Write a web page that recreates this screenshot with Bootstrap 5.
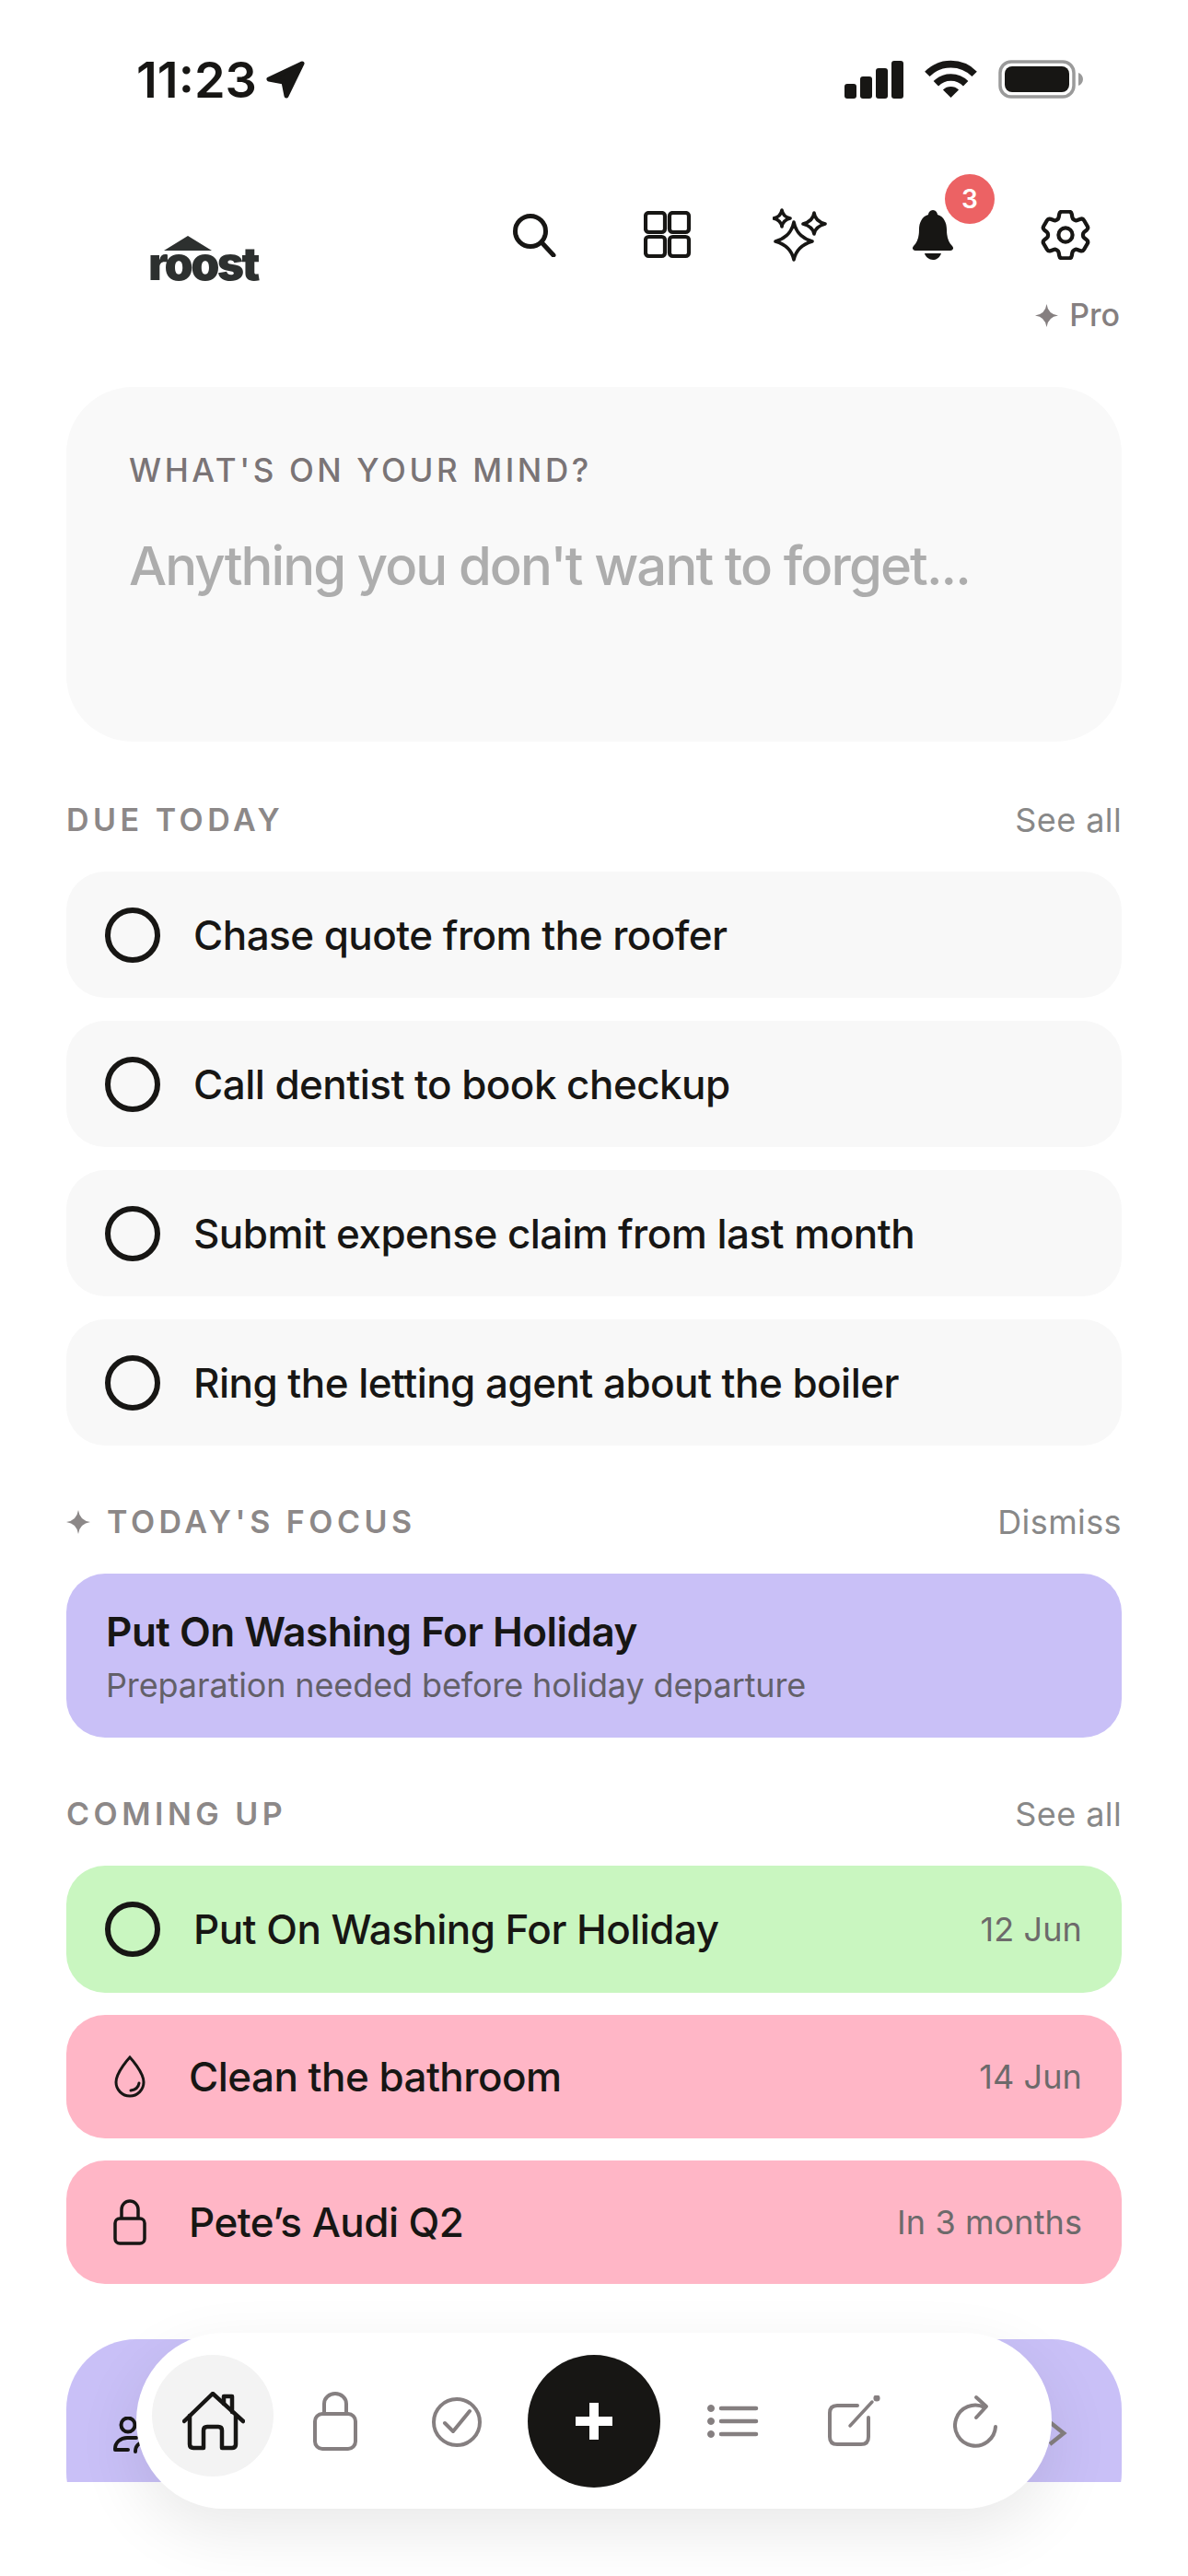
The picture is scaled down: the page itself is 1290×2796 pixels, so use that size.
<!DOCTYPE html>
<html lang="en">
<head>
  <meta charset="UTF-8">
  <meta name="viewport" content="width=device-width, initial-scale=1.0">
  <title>Roost - Home</title>
  <link href="https://cdn.jsdelivr.net/npm/bootstrap@5.3.2/dist/css/bootstrap.min.css" rel="stylesheet">
  <script src="https://cdn.jsdelivr.net/npm/bootstrap@5.3.2/dist/js/bootstrap.bundle.min.js" defer></script>
  <style>
    body { background: #fff; color: #171614; font-family: Inter, "Liberation Sans", sans-serif; }
    svg { display: block; flex: none; }

    .app-screen { width: 1290px; height: 2796px; overflow: hidden; }
    .scroll-pane { height: 2694px; overflow: hidden; }

    /* status bar */
    .status-bar { padding: 65px 113px 0 148px; height: 109px; }
    .status-time { font-size: 54px; font-weight: 600; line-height: 44px; }
    .status-icons { gap: 23px; }
    .signal-bars { gap: 4px; height: 41px; }
    .signal-bars i { display: block; width: 13px; border-radius: 3px; background: #171614; }

    /* header */
    .top-header { margin-top: 117px; padding: 0 72px 0 161px; }
    .logo-mark { margin-top: 30px; width: 122px; }
    .logo-word { font-family: Inter, sans-serif; font-weight: 900; font-size: 50px; line-height: 40px; letter-spacing: -2.6px; color: #2d302f; margin-top: -7px; }
    .tool-icons { margin-right: -11px; }
    .tool-slot { width: 144px; height: 57px; }
    .notif-count { top: -37px; left: 85px; width: 54px; height: 54px; background: #ec6264; color: #fff; font-size: 28px; font-weight: 600; }
    .pro-tag { gap: 12px; margin-top: 44px; margin-right: 2px; color: #857f80; font-size: 34px; font-weight: 500; line-height: 30px; }

    /* content */
    .main-pane { padding: 0 72px; }
    .capture-box { height: 385px; margin-top: 63px; margin-bottom: 65px; padding: 70px 68px 0; background: #f9f9f9; border-radius: 72px; }
    .capture-label { font-size: 35px; font-weight: 500; letter-spacing: 3.6px; line-height: 40px; color: #7a7476; }
    .capture-hint { margin-top: 49px; font-size: 58px; font-weight: 500; line-height: 70px; letter-spacing: -1.9px; color: #adadad; }

    .section-head { height: 40px; margin-bottom: 36px; margin-top: 63px; }
    .section-title { gap: 18px; font-size: 34px; font-weight: 600; letter-spacing: 4.5px; color: #8c8888; line-height: 40px; }
    .section-link { font-size: 36px; letter-spacing: .4px; color: #888; line-height: 40px; }

    .task-stack { gap: 25px; }
    .task-stack.tight { gap: 24px; }
    .task-item { height: 137px; padding: 0 43px 0 42px; border-radius: 42px; background: #f8f8f8; font-size: 44px; font-weight: 500; letter-spacing: -.55px; }
    .task-item.short { height: 134px; padding-left: 51px; }
    .task-tick { width: 60px; height: 60px; margin-right: 36px; border: 6px solid #171614; border-radius: 50%; flex: none; }
    .task-icon { margin-right: 46px; }
    .task-date { margin-left: auto; font-size: 36px; font-weight: 400; letter-spacing: .1px; color: #6d6a6b; }
    .tone-green { background: #c9f6c0; height: 138px; }
    .tone-pink { background: #ffb6c6; }

    .focus-box { height: 178px; padding: 0 43px; background: #c9c0f7; border-radius: 42px; }
    .focus-title { font-size: 44px; font-weight: 600; line-height: 56px; letter-spacing: -.5px; }
    .focus-sub { font-size: 36px; line-height: 44px; margin-top: 8px; letter-spacing: -.12px; color: #636068; }

    .next-box { height: 220px; margin-top: 60px; padding: 84px 59px 0 51px; background: #c9c0f7; border-radius: 76px; }

    /* floating tab bar */
    .tab-dock { left: 148px; top: 2532px; width: 994px; height: 191px; border-radius: 96px; background: #fff; box-shadow: 0 24px 70px rgba(0, 0, 0, .09); }
    .tab-home { left: 17px; top: 24px; width: 132px; height: 132px; background: #f3f3f3; }
    .tab-glyph { position: absolute; }
    .tab-add { left: 425px; top: 24px; width: 144px; height: 144px; background: #171614; }
  </style>
</head>
<body>
  <div class="app-screen position-relative">
    <div class="scroll-pane">

      <!-- status bar -->
      <div class="status-bar d-flex justify-content-between align-items-start">
        <div class="d-flex align-items-center gap-2">
          <span class="status-time">11:23</span>
          <svg width="46" height="44" viewBox="0 0 46 44"><polygon points="41,4 5,21 21,24 24,39" fill="#171614" stroke="#171614" stroke-width="5" stroke-linejoin="round"/></svg>
        </div>
        <div class="status-icons d-flex align-items-center">
          <div class="signal-bars d-flex align-items-end">
            <i style="height: 16px"></i><i style="height: 24px"></i><i style="height: 33px"></i><i style="height: 41px"></i>
          </div>
          <svg width="57" height="42" viewBox="0 0 60 42" fill="none" stroke="#171614" stroke-width="8">
            <path d="M3 15a38 38 0 0 1 54 0"/>
            <path d="M13 26a24 24 0 0 1 34 0"/>
            <path d="M21 33l9 9 9-9a13 13 0 0 0-18 0z" fill="#171614" stroke="none"/>
          </svg>
          <svg width="93" height="42" viewBox="0 0 93 42">
            <rect x="2" y="2" width="80" height="38" rx="12" fill="none" stroke="#9a9a9a" stroke-width="3.5"/>
            <rect x="7" y="7" width="70" height="28" rx="8" fill="#171614"/>
            <path d="M87 14c3 1 5 4 5 7s-2 6-5 7z" fill="#9a9a9a"/>
          </svg>
        </div>
      </div>

      <!-- header -->
      <header class="top-header d-flex justify-content-between align-items-start">
        <div class="logo-mark d-flex flex-column">
          <svg class="ms-3" width="54" height="17" viewBox="0 0 54 17"><polygon points="27,0 53,16 1,16" fill="#2d302f"/></svg>
          <div class="logo-word">roost</div>
        </div>
        <div class="d-flex flex-column align-items-end">
          <div class="tool-icons d-flex">
            <div class="tool-slot d-flex align-items-center justify-content-center">
              <svg width="48" height="48" viewBox="0 0 48 48" fill="none" stroke="#171614" stroke-width="5" stroke-linecap="round"><circle cx="19" cy="20" r="16.5"/><path d="M31 32l13 14"/></svg>
            </div>
            <div class="tool-slot d-flex align-items-center justify-content-center">
              <svg width="52" height="52" viewBox="0 0 52 52" fill="none" stroke="#171614" stroke-width="4.2"><rect x="2" y="2" width="21" height="21" rx="3.5"/><rect x="28" y="2" width="21" height="21" rx="3.5"/><rect x="2" y="28" width="21" height="21" rx="3.5"/><rect x="28" y="28" width="21" height="21" rx="3.5"/></svg>
            </div>
            <div class="tool-slot d-flex align-items-center justify-content-center">
              <svg width="60" height="58" viewBox="0 0 60 58" fill="none" stroke="#171614" stroke-width="3.6" stroke-linejoin="round">
                <path d="M23 15Q26 31 43 36Q26 41 23 56Q20 41 3 36Q20 31 23 15Z"/>
                <path d="M10 2Q11 9 19 11Q11 13 10 20Q9 13 1 11Q9 9 10 2Z"/>
                <path d="M45 5Q46 14 57 17Q46 20 45 28Q44 20 33 17Q44 14 45 5Z"/>
              </svg>
            </div>
            <div class="tool-slot d-flex align-items-center justify-content-center position-relative">
              <svg width="46" height="54" viewBox="0 0 46 54" fill="#171614"><path d="M23 0c3 0 5 3 5 5 7 2 10 9 10 16 0 9 2 14 6 18 2 2 1 5-2 5H4c-3 0-4-3-2-5 4-4 6-9 6-18 0-7 3-14 10-16 0-2 2-5 5-5z"/><path d="M14 47h18c-1 4-5 7-9 7s-8-3-9-7z"/></svg>
              <span class="notif-count position-absolute rounded-circle d-flex align-items-center justify-content-center">3</span>
            </div>
            <div class="tool-slot d-flex align-items-center justify-content-center">
              <svg width="54" height="54" viewBox="2.4 2.4 19.2 19.2" fill="none" stroke="#171614" stroke-width="1.5" stroke-linejoin="round"><path d="M9.594 3.94c.09-.542.56-.94 1.11-.94h2.593c.55 0 1.02.398 1.11.94l.213 1.281c.063.374.313.686.645.87.074.04.147.083.22.127.325.196.72.257 1.075.124l1.217-.456a1.125 1.125 0 0 1 1.37.49l1.296 2.247a1.125 1.125 0 0 1-.26 1.431l-1.003.827c-.293.241-.438.613-.43.992a7.723 7.723 0 0 1 0 .255c-.008.378.137.75.43.991l1.004.827c.424.35.534.955.26 1.43l-1.298 2.247a1.125 1.125 0 0 1-1.369.491l-1.217-.456c-.355-.133-.75-.072-1.076.124a6.47 6.47 0 0 1-.22.128c-.331.183-.581.495-.644.869l-.213 1.281c-.09.543-.56.94-1.11.94h-2.594c-.55 0-1.019-.398-1.11-.94l-.213-1.281c-.062-.374-.312-.686-.644-.87a6.52 6.52 0 0 1-.22-.127c-.325-.196-.72-.257-1.076-.124l-1.217.456a1.125 1.125 0 0 1-1.369-.49l-1.297-2.247a1.125 1.125 0 0 1 .26-1.431l1.004-.827c.292-.24.437-.613.43-.991a6.932 6.932 0 0 1 0-.255c.007-.38-.138-.751-.43-.992l-1.004-.827a1.125 1.125 0 0 1-.26-1.43l1.297-2.247a1.125 1.125 0 0 1 1.37-.491l1.216.456c.356.133.751.072 1.076-.124.072-.044.146-.086.22-.128.332-.183.582-.495.644-.869l.214-1.28Z"/><circle cx="12" cy="12" r="2.7"/></svg>
            </div>
          </div>
          <div class="pro-tag d-flex align-items-center">
            <svg width="25" height="25" viewBox="0 0 25 25" fill="#857f80"><path d="M12.5 0Q14 11 25 12.5Q14 14 12.5 25Q11 14 0 12.5Q11 11 12.5 0Z"/></svg>
            <span>Pro</span>
          </div>
        </div>
      </header>

      <main class="main-pane">
        <div class="capture-box">
          <div class="capture-label">WHAT'S ON YOUR MIND?</div>
          <div class="capture-hint">Anything you don't want to forget...</div>
        </div>

        <div class="section-head d-flex justify-content-between align-items-center">
          <div class="section-title">DUE TODAY</div>
          <div class="section-link">See all</div>
        </div>
        <div class="task-stack d-flex flex-column" id="due-list"></div>

        <div class="section-head d-flex justify-content-between align-items-center">
          <div class="section-title d-flex align-items-center">
            <svg width="26" height="26" viewBox="0 0 25 25" fill="#8c8888"><path d="M12.5 0Q14 11 25 12.5Q14 14 12.5 25Q11 14 0 12.5Q11 11 12.5 0Z"/></svg>
            <span>TODAY'S FOCUS</span>
          </div>
          <div class="section-link">Dismiss</div>
        </div>
        <div class="focus-box d-flex flex-column justify-content-center">
          <div class="focus-title">Put On Washing For Holiday</div>
          <div class="focus-sub">Preparation needed before holiday departure</div>
        </div>

        <div class="section-head d-flex justify-content-between align-items-center">
          <div class="section-title">COMING UP</div>
          <div class="section-link">See all</div>
        </div>
        <div class="task-stack tight d-flex flex-column">
          <div class="task-item tone-green d-flex align-items-center">
            <span class="task-tick"></span>
            <span>Put On Washing For Holiday</span>
            <span class="task-date">12 Jun</span>
          </div>
          <div class="task-item short tone-pink d-flex align-items-center">
            <svg class="task-icon" width="36" height="46" viewBox="-1 0 36 46" fill="none" stroke="#171614" stroke-width="3"><path d="M17 2C17 2 2 18 2 29a15 15 0 0 0 30 0C32 18 17 2 17 2Z"/><path d="M18 38Q26 37 27 30" stroke-linecap="round"/></svg>
            <span>Clean the bathroom</span>
            <span class="task-date">14 Jun</span>
          </div>
          <div class="task-item short tone-pink d-flex align-items-center">
            <svg class="task-icon" width="36" height="50" viewBox="0 0 36 50" fill="none" stroke="#171614" stroke-width="3.5"><rect x="2" y="21" width="32" height="27" rx="5"/><path d="M9 21V11a9 9 0 0 1 18 0v10"/></svg>
            <span>Pete’s Audi Q2</span>
            <span class="task-date">In 3 months</span>
          </div>
        </div>

        <div class="next-box d-flex justify-content-between align-items-start">
          <svg width="60" height="40" viewBox="0 0 60 40" fill="none" stroke="#171614" stroke-width="4" stroke-linecap="round"><circle cx="16" cy="9" r="7.5"/><path d="M2 35c0-7 6-12 13-12h10M2 36h14"/><path d="M24 38c0-6 4-10 10-10"/></svg>
          <svg class="mt-1" width="22" height="28" viewBox="0 0 22 28" fill="none" stroke="#857f80" stroke-width="4.5"><path d="M3 2l15 12L3 26"/></svg>
        </div>
      </main>
    </div>

    <!-- floating tab bar -->
    <nav class="tab-dock position-absolute">
      <span class="tab-home position-absolute rounded-circle"></span>
      <svg class="tab-glyph" style="left: 50px; top: 64px" width="68" height="65" viewBox="0 0 68 65" fill="none" stroke="#171614" stroke-width="4.5" stroke-linecap="round" stroke-linejoin="round"><path d="M2 32L33 2l33 30"/><path d="M8 26v31q0 4 4 4h11V42q0-4 4-4h12q4 0 4 4v19h11q4 0 4-4V26"/><path d="M45 13V5h9v17"/></svg>
      <svg class="tab-glyph" style="left: 192px; top: 64px" width="48" height="64" viewBox="0 0 48 64" fill="none" stroke="#857f80" stroke-width="4"><rect x="2" y="24" width="44" height="38" rx="8"/><path d="M12 24V13a12 11 0 0 1 24 0v11"/></svg>
      <svg class="tab-glyph" style="left: 321px; top: 70px" width="54" height="54" viewBox="0 0 54 54" fill="none" stroke="#857f80" stroke-width="4" stroke-linecap="round" stroke-linejoin="round"><circle cx="27" cy="27" r="25"/><path d="M14 28l9 9 18-22"/></svg>
      <span class="tab-add tab-glyph rounded-circle d-flex align-items-center justify-content-center">
        <svg width="42" height="42" viewBox="0 0 42 42" fill="#fff"><rect x="16" y="1" width="10" height="40"/><rect x="1" y="16" width="40" height="10"/></svg>
      </span>
      <svg class="tab-glyph" style="left: 620px; top: 78px" width="56" height="38" viewBox="0 0 56 38" fill="#857f80" stroke="#857f80"><circle cx="4" cy="4" r="3.5"/><circle cx="4" cy="18" r="3.5"/><circle cx="4" cy="32" r="3.5"/><g stroke-width="4.5" stroke-linecap="round"><path d="M15 4h38M15 18h38M15 32h38"/></g></svg>
      <svg class="tab-glyph" style="left: 750px; top: 68px" width="58" height="58" viewBox="0 0 58 58" fill="none" stroke="#857f80" stroke-width="4" stroke-linecap="round"><path d="M33 11H11q-8 0-8 8v26q0 8 8 8h26q8 0 8-8V24"/><path d="M25 33L49 7" stroke-width="3.5"/><circle cx="54" cy="3" r="1.6" fill="#857f80"/></svg>
      <svg class="tab-glyph" style="left: 887px; top: 66px" width="50" height="62" viewBox="0 0 50 62" fill="none" stroke="#857f80" stroke-width="4" stroke-linecap="round" stroke-linejoin="round"><path d="M25 4l11 10-11 12"/><path d="M46 36a22 22 0 1 1-12-21"/></svg>
    </nav>
  </div>

  <script>
    const dueTasks = [
      'Chase quote from the roofer',
      'Call dentist to book checkup',
      'Submit expense claim from last month',
      'Ring the letting agent about the boiler'
    ];
    const dueList = document.getElementById('due-list');
    dueTasks.forEach(task => {
      const item = document.createElement('div');
      item.className = 'task-item d-flex align-items-center';
      item.innerHTML = `<span class="task-tick"></span><span>${task}</span>`;
      dueList.appendChild(item);
    });
  </script>
</body>
</html>
